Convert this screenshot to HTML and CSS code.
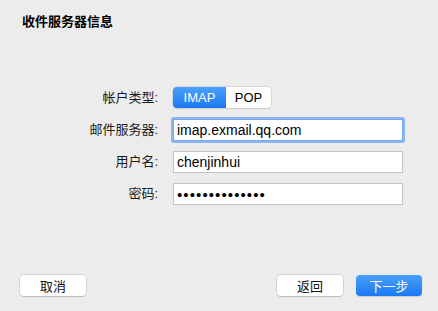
FILE: index.html
```html
<!DOCTYPE html>
<html lang="zh-CN">
<head>
    <meta charset="UTF-8">
    <title>收件服务器信息</title>
    <link rel="stylesheet" href="styles.css">
</head>
<body>
    <div class="sheet">
        <h1 class="title">收件服务器信息</h1>

        <div class="form">
            <label class="label">帐户类型:</label>
            <div class="segmented">
                <span class="seg seg-active">IMAP</span>
                <span class="seg">POP</span>
            </div>

            <label class="label" for="server">邮件服务器:</label>
            <input class="field focused" id="server" type="text" value="imap.exmail.qq.com">

            <label class="label" for="user">用户名:</label>
            <input class="field" id="user" type="text" value="chenjinhui">

            <label class="label" for="pass">密码:</label>
            <input class="field field-pass" id="pass" type="password" value="abcdefghijklmn">
        </div>

        <div class="footer">
            <button class="btn">取消</button>
            <div class="footer-right">
                <button class="btn">返回</button>
                <button class="btn btn-primary">下一步</button>
            </div>
        </div>
    </div>
</body>
</html>
```

FILE: styles.css
```css
body {
    margin: 0;
    padding: 0;
    background: #ececec;
    font-family: "Liberation Sans", "Noto Sans CJK SC", sans-serif;
    font-size: 13px;
    color: #000;
}

.sheet {
    width: 438px;
    height: 311px;
    display: flex;
    flex-direction: column;
}

.title {
    margin: 0;
    padding: 14px 0 0 22px;
    font-size: 13px;
    line-height: 16px;
    font-weight: bold;
}

.form {
    margin-top: 57px;
    display: grid;
    grid-template-columns: 158px 230px;
    grid-auto-rows: 22px;
    column-gap: 15px;
    row-gap: 10px;
}

.label {
    text-align: right;
    line-height: 22px;
    color: #1b1b1b;
}

.segmented {
    display: flex;
    width: 98px;
    height: 21px;
    border-radius: 4px;
    background: #fff;
    box-shadow: 0 0 0 0.5px #c4c4c4, 0 1px 1px rgba(0, 0, 0, 0.12);
    overflow: hidden;
}

.seg {
    flex: 0 0 45px;
    text-align: center;
    line-height: 21px;
    font-size: 13px;
}

.seg-active {
    flex-basis: 53px;
    color: #fff;
    background: linear-gradient(#4aa0fb, #1a79f3);
}

.field {
    box-sizing: border-box;
    height: 22px;
    margin: 0;
    padding: 0 3px;
    border: 1px solid #c3c3c3;
    border-radius: 0;
    background: #fff;
    font-family: "Liberation Sans", "Noto Sans CJK SC", sans-serif;
    font-size: 14px;
    color: #000;
    outline: none;
}

.field-pass {
    font-size: 15px;
    letter-spacing: 1.1px;
}

.field.focused {
    border-color: #7aa9e6;
    box-shadow: 0 0 0 2px #8bb8f3;
    border-radius: 1px;
}

.footer {
    margin-top: auto;
    padding: 0 16px 15px 20px;
    display: flex;
    justify-content: space-between;
}

.footer-right {
    display: flex;
    gap: 13px;
}

.btn {
    width: 66px;
    height: 21px;
    padding: 0;
    border: none;
    border-radius: 4px;
    background: #fff;
    box-shadow: 0 0 0 0.5px #bcbcbc, 0 1px 1px rgba(0, 0, 0, 0.18);
    font-family: "Liberation Sans", "Noto Sans CJK SC", sans-serif;
    font-size: 13px;
    color: #111;
    cursor: pointer;
}

.btn-primary {
    color: #fff;
    background: linear-gradient(#4aa0fb, #1a79f3);
    box-shadow: 0 1px 1px rgba(0, 0, 0, 0.15);
}
```
